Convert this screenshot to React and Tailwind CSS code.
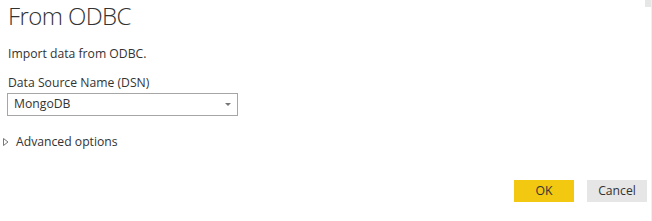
export default function App() {
  return (
    <div className="relative w-[652px] h-[221px] bg-white overflow-hidden text-[#333333]" style={{ fontFamily: '"Open Sans", "Noto Sans", sans-serif' }}>
      <div className="flex flex-col pl-[8px]">
        <div className="h-[32px] pt-[2px] text-[24px] font-light leading-[28px] tracking-[-0.6px]">From ODBC</div>
        <div className="mt-[13px] text-[12.2px] leading-[18px]">Import data from ODBC.</div>
        <div className="mt-[11px] text-[12.2px] leading-[18px]">Data Source Name (DSN)</div>
        <div className="mt-[1px] w-[231px] h-[23px] -ml-[1px] border border-[#a6a6a6] flex items-center justify-between pl-[6px] pr-[6px] text-[12.2px]">
          <span>MongoDB</span>
          <span className="w-0 h-0 border-l-[3px] border-r-[3px] border-t-[3px] border-l-transparent border-r-transparent border-t-[#777777]"></span>
        </div>
        <div className="mt-[17px] flex items-center -ml-[6px] text-[12.2px] leading-[18px]">
          <svg width="8" height="10" viewBox="0 0 8 10" className="mr-[6px]">
            <path d="M1.5 1.5 L6 5 L1.5 8.5 Z" fill="none" stroke="#777777" strokeWidth="1" />
          </svg>
          <span>Advanced options</span>
        </div>
      </div>
      <div className="absolute left-[514px] top-[180px] flex gap-[13px]">
        <button className="w-[60px] h-[22px] bg-[#F2C811] text-[12.2px] text-[#333333]">OK</button>
        <button className="w-[60px] h-[22px] bg-[#E6E6E6] text-[12.2px] text-[#333333]">Cancel</button>
      </div>
      <div className="absolute right-0 top-0 w-[1px] h-full bg-[#eeeeee]"></div>
      <div className="absolute right-[1px] top-0 w-[6px] h-[7px] bg-[#e6e6e6]"></div>
    </div>
  );
}
